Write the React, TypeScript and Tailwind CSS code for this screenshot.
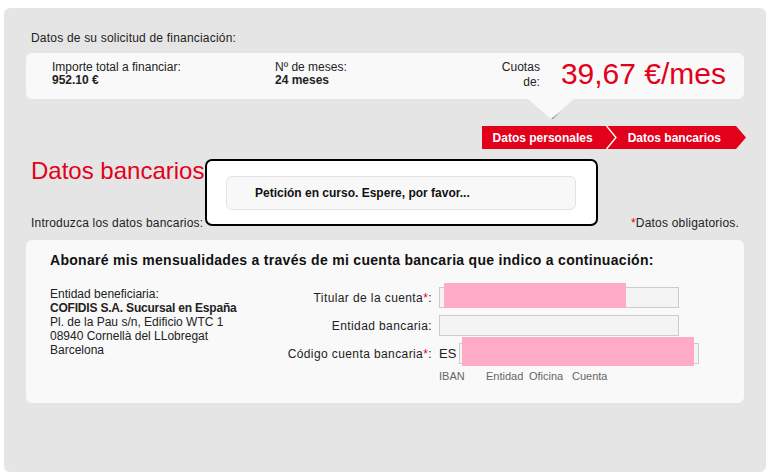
import React from "react";

const Req: React.FC = () => <span className="text-[#e2001a]">*</span>;

export default function App() {
  return (
    <div className="w-[776px] h-[476px] bg-white pt-[8px] pl-[4px] font-['Liberation_Sans',Arial,sans-serif] text-[12px] text-[#222]">
      <div className="relative w-[762px] h-[464px] rounded-[6px] bg-[#e5e5e5] px-[22px] pt-[23px]">
        <p className="pl-[5px] leading-[14px] tracking-[0.2px]">Datos de su solicitud de financiación:</p>

        {/* resumen */}
        <div className="relative mt-[8px] flex h-[46px] items-start rounded-[6px] bg-[#f9f9f9] pl-[26px] pr-[18px] pt-[8px]">
          <div className="w-[223px] leading-[13px]">
            <div>Importe total a financiar:</div>
            <div className="font-bold">952.10 €</div>
          </div>
          <div className="flex-1 leading-[13px]">
            <div>Nº de meses:</div>
            <div className="font-bold">24 meses</div>
          </div>
          <div className="-mt-[1px] text-right leading-[15px]">
            Cuotas
            <br />
            de:
          </div>
          <div className="-mt-[2px] ml-[21px] text-[30px] leading-[30px] text-[#e2001a]">39,67 €/mes</div>
          <svg className="absolute left-[502px] top-[46px]" width="46" height="20" viewBox="0 0 46 20">
            <defs>
              <linearGradient id="sh" x1="0" y1="0" x2="0" y2="1">
                <stop offset="0" stopColor="#e5e5e5" stopOpacity="0" />
                <stop offset="1" stopColor="#8a8a8a" />
              </linearGradient>
            </defs>
            <polygon points="0,0 46,0 23,20" fill="#f9f9f9" />
            <polygon points="34,10 23,20 25,20 36,11" fill="url(#sh)" />
          </svg>
        </div>

        {/* pasos */}
        <div className="mt-[27px] -mr-[2px] flex justify-end">
          <div className="flex h-[23px] items-center bg-[#e2001a] pl-[11px] pr-[25px] font-bold text-white [clip-path:polygon(0_0,calc(100%-10px)_0,100%_50%,calc(100%-10px)_100%,0_100%)]">
            <span>Datos personales</span>
            <svg className="ml-[13px] mr-[11px]" width="11" height="23" viewBox="0 0 11 23">
              <path d="M0.5 0 L10 11.5 L0.5 23" fill="none" stroke="#fff" strokeWidth="1.4" />
            </svg>
            <span>Datos bancarios</span>
          </div>
        </div>

        <h1 className="mt-[8px] pl-[5px] text-[24px] leading-[28px] text-[#e2001a]">Datos bancarios</h1>

        <div className="mt-[31px] flex justify-between px-[5px] leading-[14px] tracking-[0.2px]">
          <span>Introduzca los datos bancarios:</span>
          <span>
            <Req />
            Datos obligatorios.
          </span>
        </div>

        {/* cuenta */}
        <div className="mt-[10px] h-[163px] rounded-[6px] bg-[#f9f9f9] pl-[24px] pt-[12px]">
          <h2 className="text-[14px] font-bold leading-[16px] tracking-[0.3px] text-[#111]">
            Abonaré mis mensualidades a través de mi cuenta bancaria que indico a continuación:
          </h2>
          <div className="mt-[19px] flex">
            <div className="w-[200px] leading-[14px]">
              <div>Entidad beneficiaria:</div>
              <div className="font-bold tracking-[-0.2px]">COFIDIS S.A. Sucursal en España</div>
              <div>Pl. de la Pau s/n, Edificio WTC 1</div>
              <div>08940 Cornellà del LLobregat</div>
              <div>Barcelona</div>
            </div>
            <div className="flex w-[182px] flex-col gap-[7px] text-right tracking-[0.4px]">
              <div className="flex h-[21px] items-center justify-end">
                Titular de la cuenta<Req />:
              </div>
              <div className="flex h-[21px] items-center justify-end">Entidad bancaria:</div>
              <div className="flex h-[21px] items-center justify-end">
                Código cuenta bancaria<Req />:
              </div>
            </div>
            <div className="ml-[7px] flex flex-col gap-[7px]">
              <div className="relative h-[21px] w-[240px] border border-[#cccccc] bg-[#f4f4f4]">
                <div className="absolute left-[4px] -top-[5px] h-[25px] w-[182px] bg-[#ffabc8]" />
              </div>
              <div className="h-[21px] w-[240px] border border-[#cccccc] bg-[#f4f4f4]" />
              <div className="flex h-[21px] items-center">
                <span className="text-[13px]">ES</span>
                <div className="relative ml-[3px] h-[21px] w-[240px] border border-[#cccccc] bg-[#f4f4f4]">
                  <div className="absolute left-[2px] -top-[7px] h-[29px] w-[232px] bg-[#ffabc8]" />
                </div>
              </div>
              <div className="-mt-[1px] flex text-[11px] leading-[13px] text-[#666]">
                <span className="w-[47px]">IBAN</span>
                <span className="w-[43px]">Entidad</span>
                <span className="w-[43px]">Oficina</span>
                <span>Cuenta</span>
              </div>
            </div>
          </div>
        </div>

        {/* aviso */}
        <div className="absolute left-[201px] top-[151px] h-[67px] w-[393px] rounded-[7px] border-2 border-black bg-white">
          <div className="ml-[19px] mt-[15px] flex h-[34px] w-[350px] items-center rounded-[6px] border border-[#e3e3e3] bg-[#f8f8f8] pl-[28px] font-bold text-[#111]">
            Petición en curso. Espere, por favor...
          </div>
        </div>
      </div>
    </div>
  );
}
